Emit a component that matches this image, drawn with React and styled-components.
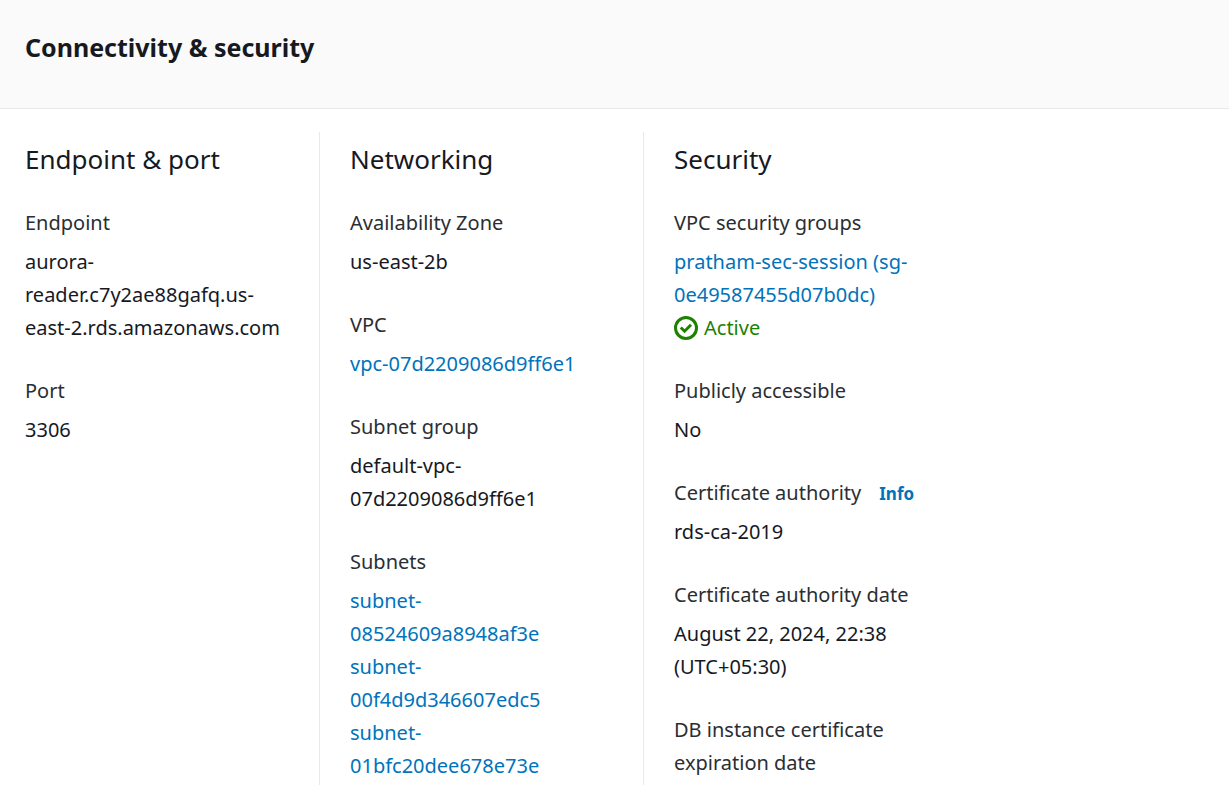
import React from "react";
import styled, { createGlobalStyle } from "styled-components";

const GlobalStyle = createGlobalStyle`
  *, *::before, *::after { box-sizing: border-box; }
  body {
    margin: 0;
    background: #ffffff;
    color: #16191f;
    font-family: "Amazon Ember", "Noto Sans", "Open Sans", sans-serif;
    font-size: 20px;
    line-height: 33px;
  }
`;

const Panel = styled.main`
  display: flex;
  flex-direction: column;
  min-height: 100vh;
`;

const PanelHeader = styled.header`
  padding: 31px 25px 44px;
  background: #fafafa;
  border-bottom: 1px solid #e8eaea;
`;

const PanelTitle = styled.h2`
  margin: 0;
  font-size: 25px;
  font-weight: 700;
  line-height: 33px;
`;

const Columns = styled.div`
  flex: 1;
  display: grid;
  grid-template-columns: 319fr 324fr 586fr;
  padding-top: 23px;
`;

const Column = styled.section`
  min-width: 0;
  padding: 11px 25px 0 30px;
  border-left: 1px solid #e8eaea;

  &:first-child {
    padding-left: 25px;
    border-left: 0;
  }
`;

const ColumnTitle = styled.h3`
  margin: 0 0 30px;
  font-size: 26px;
  font-weight: 400;
  line-height: 33px;
`;

const Fields = styled.dl`
  display: flex;
  flex-direction: column;
  gap: 30px;
  max-width: 258px;
  margin: 0;
`;

const Label = styled.dt`
  margin-bottom: 6px;
  color: #2a2e33;
`;

const Value = styled.dd`
  margin: 0;
`;

const Link = styled.a`
  color: #0073bb;
  text-decoration: none;

  &:hover { text-decoration: underline; }
`;

const InfoLink = styled(Link)`
  margin-left: 18px;
  font-size: 17px;
  font-weight: 700;
  line-height: 1;
`;

const Status = styled.div`
  display: flex;
  align-items: center;
  gap: 6px;
  color: #1d8102;
`;

function CheckIcon() {
  return (
    <svg width="24" height="24" viewBox="0 0 24 24" fill="none" stroke="currentColor" strokeWidth="3" aria-hidden="true">
      <circle cx="12" cy="12" r="10.5" />
      <path d="M6.8 11.5 10.6 15.2 17 8.8" />
    </svg>
  );
}

function Field({ label, info, children }) {
  return (
    <div>
      <Label>
        {label}
        {info && <InfoLink href="#info">Info</InfoLink>}
      </Label>
      {children && <Value>{children}</Value>}
    </div>
  );
}

const subnets = ["08524609a8948af3e", "00f4d9d346607edc5", "01bfc20dee678e73e"];

export default function App() {
  return (
    <Panel>
      <GlobalStyle />
      <PanelHeader>
        <PanelTitle>Connectivity &amp; security</PanelTitle>
      </PanelHeader>
      <Columns>
        <Column>
          <ColumnTitle>Endpoint &amp; port</ColumnTitle>
          <Fields>
            <Field label="Endpoint">aurora-<wbr />reader.c7y2ae88gafq.us-<wbr />east-2.rds.amazonaws.com</Field>
            <Field label="Port">3306</Field>
          </Fields>
        </Column>
        <Column>
          <ColumnTitle>Networking</ColumnTitle>
          <Fields>
            <Field label="Availability Zone">us-east-2b</Field>
            <Field label="VPC"><Link href="#vpc">vpc-07d2209086d9ff6e1</Link></Field>
            <Field label="Subnet group">default-vpc-<wbr />07d2209086d9ff6e1</Field>
            <Field label="Subnets">
              {subnets.map((id) => (
                <div key={id}>
                  <Link href={`#subnet-${id}`}>subnet-<wbr />{id}</Link>
                </div>
              ))}
            </Field>
          </Fields>
        </Column>
        <Column>
          <ColumnTitle>Security</ColumnTitle>
          <Fields>
            <Field label="VPC security groups">
              <Link href="#security-group">pratham-sec-session (sg-<wbr />0e49587455d07b0dc)</Link>
              <Status><CheckIcon />Active</Status>
            </Field>
            <Field label="Publicly accessible">No</Field>
            <Field label="Certificate authority" info>rds-ca-2019</Field>
            <Field label="Certificate authority date">August 22, 2024, 22:38 (UTC+05:30)</Field>
            <Field label="DB instance certificate expiration date" />
          </Fields>
        </Column>
      </Columns>
    </Panel>
  );
}
